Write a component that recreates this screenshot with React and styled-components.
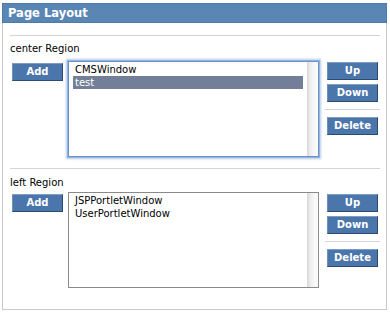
import React from "react";
import styled, { createGlobalStyle, css } from "styled-components";

const Global = createGlobalStyle`
  html, body { margin: 0; padding: 0; background: #ffffff; }
  body { font-family: "DejaVu Sans", Verdana, sans-serif; }
`;

const Panel = styled.div`
  box-sizing: border-box;
  margin: 3px 0 0 2px;
  width: 385px;
  height: 307px;
  border: 1px solid #c9c9c9;
  border-top: none;
  display: flex;
  flex-direction: column;
`;

const Header = styled.div`
  box-sizing: border-box;
  height: 20px;
  margin: 0 -1px;
  background: #5a86b4;
  border: 1px solid #4e79a8;
  color: #ffffff;
  font-weight: bold;
  font-size: 11.5px;
  line-height: 18px;
  padding-left: 5px;
`;

const Body = styled.div`
  padding: 12px 6px 0 7px;
`;

const Section = styled.div`
  border-top: 1px solid #d4d4d4;
  padding-top: ${(p) => (p.$first ? 6 : 7)}px;
  padding-bottom: 11px;
`;

const Title = styled.div`
  font-size: 10px;
  line-height: 13px;
  color: #000;
  margin-bottom: ${(p) => (p.$first ? 6 : 3)}px;
`;

const Row = styled.div`
  display: flex;
  align-items: flex-start;
`;

const Btn = styled.button`
  box-sizing: border-box;
  display: block;
  width: 51px;
  height: 18px;
  padding: 0;
  margin: 0;
  background: #4b76ab;
  border: 1px solid;
  border-color: #7c9dc6 #2c4b72 #2c4b72 #6e90bb;
  color: #ffffff;
  font-family: "DejaVu Sans", Verdana, sans-serif;
  font-weight: bold;
  font-size: 10px;
  line-height: 16px;
  text-align: center;
`;

const AddCol = styled.div`
  padding: 2px 0 0 2px;
`;

const List = styled.div`
  box-sizing: border-box;
  margin-left: 5px;
  width: 251px;
  height: 96px;
  display: flex;
  background: #fff;
  ${(p) =>
    p.$focused
      ? css`
          border: 1px solid #6f93c4;
          box-shadow: 0 0 0 1px #8fb3e2, 0 0 2px 2px rgba(120, 160, 215, 0.55);
        `
      : css`
          border: 1px solid #8a8a8a;
        `}
`;

const Items = styled.div`
  flex: 1;
  padding: 1px 4px 0 4px;
`;

const Item = styled.div`
  font-size: 10px;
  line-height: 13px;
  height: 13px;
  padding-left: 2px;
  color: ${(p) => (p.$selected ? "#ffffff" : "#000000")};
  background: ${(p) => (p.$selected ? "#737f98" : "transparent")};
`;

const Scroll = styled.div`
  width: 11px;
  background: linear-gradient(to right, #d6d6d6 0, #ececec 3px, #f7f7f7 7px, #fbfbfb 100%);
`;

const SideCol = styled.div`
  margin-left: 6px;
  width: 55px;
  padding-top: ${(p) => p.$top}px;
  display: flex;
  flex-direction: column;
  align-items: flex-start;
`;

const SideBtn = styled(Btn)`
  margin-left: 2px;
  margin-bottom: 4px;
`;

const SideDivider = styled.div`
  width: 55px;
  height: 1px;
  background: #d4d4d4;
  margin: 3px 0 7px;
`;

function Region({ name, items, selected, focused, first, sideTop }) {
  return (
    <Section $first={first}>
      <Title $first={first}>{name}</Title>
      <Row>
        <AddCol>
          <Btn>Add</Btn>
        </AddCol>
        <List $focused={focused}>
          <Items>
            {items.map((it) => (
              <Item key={it} $selected={it === selected}>
                {it}
              </Item>
            ))}
          </Items>
          <Scroll />
        </List>
        <SideCol $top={sideTop}>
          <SideBtn>Up</SideBtn>
          <SideBtn>Down</SideBtn>
          <SideDivider />
          <SideBtn>Delete</SideBtn>
        </SideCol>
      </Row>
    </Section>
  );
}

export default function App() {
  return (
    <>
      <Global />
      <Panel>
        <Header>Page Layout</Header>
        <Body>
          <Region
            first
            name="center Region"
            items={["CMSWindow", "test"]}
            selected="test"
            focused
            sideTop={1}
          />
          <Region
            name="left Region"
            items={["JSPPortletWindow", "UserPortletWindow"]}
            sideTop={2}
          />
        </Body>
      </Panel>
    </>
  );
}
